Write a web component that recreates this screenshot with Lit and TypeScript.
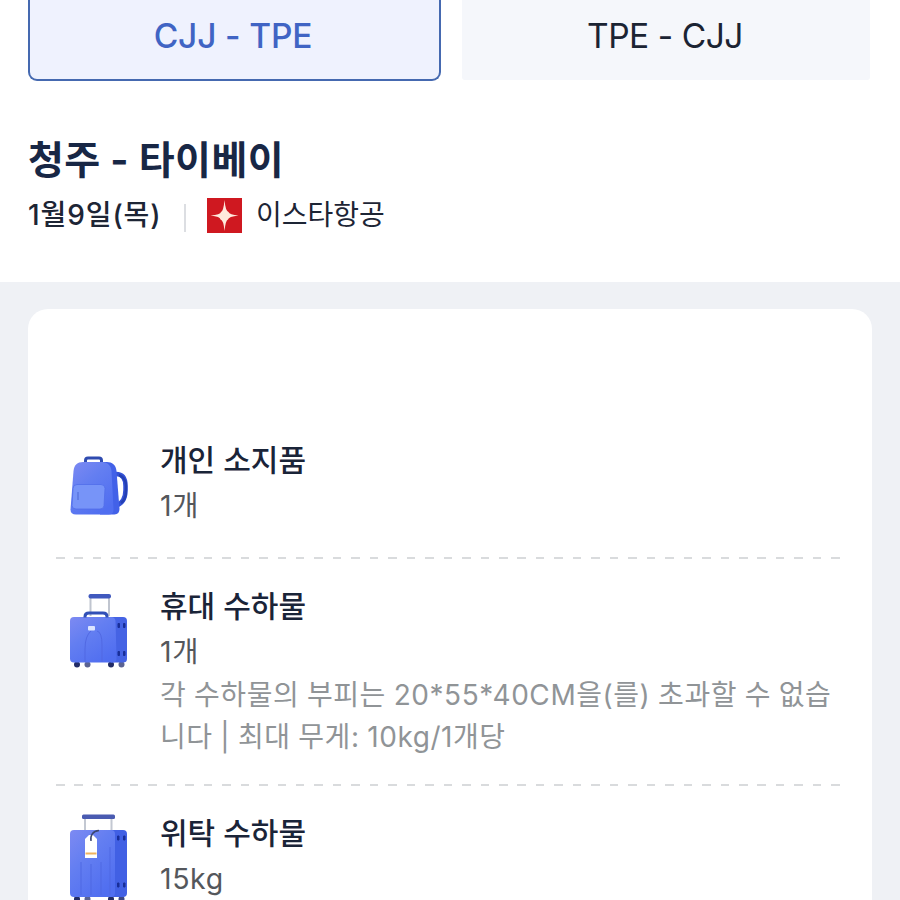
import { LitElement, html, css, svg } from "lit";
import { customElement, property } from "lit/decorators.js";

declare global {
    interface HTMLElementTagNameMap {
        "app-root": AppRoot;
        "x-tab": XTab;
        "x-bag-icon": XBagIcon;
        "x-baggage-row": XBaggageRow;
    }
}

@customElement("x-tab")
class XTab extends LitElement {
    static styles = css`
        :host {
            display: block;
        }
        .tab {
            box-sizing: border-box;
            height: 100%;
            padding: 14px 2px 0 0;
            font-size: 33.5px;
            line-height: 45px;
            text-align: center;
            letter-spacing: -0.45px;
            color: #1b2433;
            background: #f5f7fb;
            border-radius: 0 0 3px 3px;
        }
        .tab.active {
            padding-right: 3px;
            font-weight: 500;
            letter-spacing: -0.15px;
            color: #4064c4;
            background: #eff2fe;
            border: 2px solid #4569b0;
            border-top: none;
            border-radius: 0 0 9px 9px;
        }
    `;

    @property() label = "";
    @property({ type: Boolean }) active = false;

    render() {
        return html`<div class="tab ${this.active ? "active" : ""}">${this.label}</div>`;
    }
}

// all icons share an 80px wide box, the top offset is in the viewBox
const icons = {
    backpack: svg`
        <path d="M56 29c7 0 9.500 5 9.500 12v4c0 8-3 14-10.500 16" fill="none" stroke="#3452d6" stroke-width="4.500" />
        <path d="M59 30c5 2 7 6 7 11v4c0 6-2 11-5 13" fill="none" stroke="#2440b4" stroke-width="2.500" />
        <path d="M25.500 17.500v-2q0-2.500 2.500-2.500h11q2.500 0 2.500 2.500v2" fill="none" stroke="#2f4bb0" stroke-width="3" />
        <path d="M40 17h7c5 0 9 3 9.500 9l3 38q0 5-5 5.500H40z" fill="#4261e8" />
        <path d="M23 17h19c6 0 9 4 9.500 9l2 38.500q0 5-5 5H16q-5.500 0-5.500-5l3-38.500c.5-6 4-9 9.500-9z" fill="url(#body)" />
        <path d="M17 39.500h24q4 0 4 4l-1 17q0 3.500-4 3.500H16q-4 0-4-3.500l1-17q0-4 4-4z" fill="#7794f8" stroke="#506dea" stroke-width=".8" />
        <path d="M18 47v8" stroke="#5570dc" stroke-width="1.300" />
    `,
    carryon: svg`
        <path d="M30.500 12v19M49 12v19" stroke="#c0c5cf" stroke-width="2" />
        <rect x="28.500" y="9" width="22.500" height="4.500" rx="2" fill="#4059be" />
        <circle cx="17" cy="79.500" r="3" fill="#222c66" />
        <circle cx="27.500" cy="79.500" r="3" fill="#5a6292" />
        <circle cx="51" cy="79.500" r="3" fill="#222c66" />
        <circle cx="61.500" cy="79.500" r="3" fill="#5a6292" />
        <path d="M51 32h12q4 0 4 4v38q0 3.500-4 3.500H51z" fill="#4563e4" />
        <path d="M14 32h37q4 0 4.500 4l1 37.500q0 4-4 4H14q-4 0-4-4V36q0-4 4-4z" fill="url(#body)" />
        <path d="M25 77V64q0-13 6-18M42 77V60q0-13-5-14" fill="none" stroke="#5169e3" stroke-width="1" />
        <path d="M25 32.500v-1q0-3.500 4-3.500h14q4 0 4 3.500v1" fill="none" stroke="#3150b7" stroke-width="3" />
        <rect x="28" y="41" width="7" height="4.500" rx="1" fill="#dce5ff" />
        <path d="M58 38.500h1.500v4H58zM63.500 38.500H65v4h-1.500zM58 66.500h1.500v4H58zM63.500 66.500H65v4h-1.500z" fill="#192e98" stroke="#192e98" />
    `,
    checked: svg`
        <path d="M25 13v13M51.500 13v13" stroke="#c3c8d2" stroke-width="2" />
        <rect x="22" y="9.500" width="33" height="4.500" rx="1.500" fill="#4a5bb1" />
        <circle cx="17" cy="94" r="3" fill="#222c66" />
        <circle cx="27.500" cy="94" r="3" fill="#5a6292" />
        <circle cx="51" cy="94" r="3" fill="#222c66" />
        <circle cx="61.500" cy="94" r="3" fill="#3c4684" />
        <path d="M51 25h12q4 0 4 4v59q0 4-4 4H51z" fill="#4160e4" />
        <path d="M14 25h37q4 0 4 4v59q0 4-4 4H14q-4 0-4-4V29q0-4 4-4z" fill="url(#body)" />
        <path d="M21 90V57M31 90V59M41 90V57M50 90V42" stroke="#4f69e3" stroke-width="1" />
        <path d="M25 34l4-4h4l4 4v19H25z" fill="#fff" />
        <path d="M25.500 47.500h11v2h-11z" fill="#f0b35f" />
        <path d="M31 36c-1-6 2-10 8-10.500" fill="none" stroke="#3c4671" stroke-width="1.500" />
        <path d="M57.500 31H59v4h-1.500zM63.500 31H65v4h-1.500zM57.500 78H59v4h-1.500zM63.500 78H65v4h-1.500z" fill="#192e98" stroke="#192e98" />
    `,
};

type IconName = keyof typeof icons;

const iconTop: Record<IconName, number> = { backpack: -7, carryon: -1, checked: 6 };

@customElement("x-bag-icon")
class XBagIcon extends LitElement {
    static styles = css`
        :host {
            display: block;
        }
        svg {
            display: block;
        }
    `;

    @property() name: IconName = "backpack";

    render() {
        return html`
            <svg width="80" height="90" viewBox="0 ${iconTop[this.name]} 80 90">
                <defs>
                    <linearGradient id="body" x1="0" y1="0" x2=".7" y2="1">
                        <stop offset="0" stop-color="#7d8af2" />
                        <stop offset=".45" stop-color="#637ef1" />
                        <stop offset="1" stop-color="#506ef0" />
                    </linearGradient>
                </defs>
                ${icons[this.name]}
            </svg>
        `;
    }
}

@customElement("x-baggage-row")
class XBaggageRow extends LitElement {
    static styles = css`
        :host {
            display: block;
        }
        .row {
            display: flex;
            gap: 20px;
            padding: 25px 0 0 4px;
        }
        x-bag-icon {
            flex: none;
            height: 90px;
        }
        .text {
            flex: 1;
            min-width: 0;
        }
        .title {
            font-size: 30px;
            font-weight: 500;
            line-height: 45px;
            color: #1a2438;
        }
        .amount {
            font-size: 28.5px;
            line-height: 46px;
            letter-spacing: 0.6px;
            color: #54575c;
        }
        .note {
            margin-top: -1px;
            font-size: 28px;
            line-height: 42px;
            letter-spacing: 0.55px;
            word-spacing: -0.7px;
            color: #909497;
            white-space: nowrap;
        }
    `;

    @property() icon: IconName = "backpack";
    @property() heading = "";
    @property() amount = "";
    @property({ attribute: false }) note: string[] = [];

    render() {
        return html`
            <div class="row">
                <x-bag-icon .name=${this.icon}></x-bag-icon>
                <div class="text">
                    <div class="title">${this.heading}</div>
                    <div class="amount">${this.amount}</div>
                    ${this.note.length ? html`<div class="note">${this.note.map((l) => html`<div>${l}</div>`)}</div>` : ""}
                </div>
            </div>
        `;
    }
}

@customElement("app-root")
class AppRoot extends LitElement {
    static styles = css`
        :host {
            display: flex;
            flex-direction: column;
            height: 900px;
            overflow: hidden;
            background: #eff1f5;
            font-family: Inter, "Noto Sans CJK KR", sans-serif;
        }
        header {
            box-sizing: border-box;
            height: 282px;
            flex: none;
            padding: 0 30px 0 28px;
            background: #fff;
        }
        .tabs {
            display: grid;
            grid-template-columns: 413px 408px;
            gap: 21px;
            height: 81px;
        }
        .tabs x-tab:last-child {
            height: 80px;
        }
        h1 {
            margin: 53px 0 0;
            font-size: 39px;
            font-weight: 700;
            line-height: 52px;
            letter-spacing: 0.45px;
            color: #182745;
        }
        .info {
            display: flex;
            align-items: center;
            height: 40px;
            margin-top: 9px;
            font-size: 28px;
            line-height: 40px;
            color: #1d2535;
        }
        .date {
            font-weight: 500;
            letter-spacing: 0.9px;
            width: 156px;
        }
        .bar {
            width: 2px;
            height: 28px;
            margin-top: 6px;
            background: #dcdee2;
        }
        .logo {
            display: block;
            margin: 0 14px 0 21px;
        }
        .card {
            flex: none;
            box-sizing: border-box;
            width: 844px;
            height: 620px;
            margin: 27px 0 0 28px;
            padding: 104px 32px 0 28px;
            border-radius: 20px 20px 0 0;
            background: #fff;
        }
        .divider {
            height: 2px;
            background: repeating-linear-gradient(90deg, #d9dbdd 0 8.5px, transparent 8.5px 18.46px);
        }
        .first {
            height: 144px;
        }
        .second {
            height: 225px;
        }
    `;

    render() {
        return html`
            <header>
                <div class="tabs">
                    <x-tab label="CJJ - TPE" active></x-tab>
                    <x-tab label="TPE - CJJ"></x-tab>
                </div>
                <h1>청주 - 타이베이</h1>
                <div class="info">
                    <span class="date">1월9일(목)</span>
                    <span class="bar"></span>
                    <svg class="logo" width="35" height="35" viewBox="0 0 35 35">
                        <rect width="35" height="35" fill="#cf1820" />
                        <path d="M17.500 2q1 11 4 12 1 2.500 10 3.500-10 1-10.500 4-2.500 1-3.500 11.500-1-11-4-11.500 0-3-10-4 10-1 10.500-3.500 2.500-1 3.500-12z" fill="#ffe9dc" />
                    </svg>
                    <span>이스타항공</span>
                </div>
            </header>
            <div class="card">
                <x-baggage-row class="first" icon="backpack" heading="개인 소지품" amount="1개"></x-baggage-row>
                <div class="divider"></div>
                <x-baggage-row
                    class="second"
                    icon="carryon"
                    heading="휴대 수하물"
                    amount="1개"
                    .note=${["각 수하물의 부피는 20*55*40CM을(를) 초과할 수 없습", "니다 | 최대 무게: 10kg/1개당"]}
                ></x-baggage-row>
                <div class="divider"></div>
                <x-baggage-row icon="checked" heading="위탁 수하물" amount="15kg"></x-baggage-row>
            </div>
        `;
    }
}
